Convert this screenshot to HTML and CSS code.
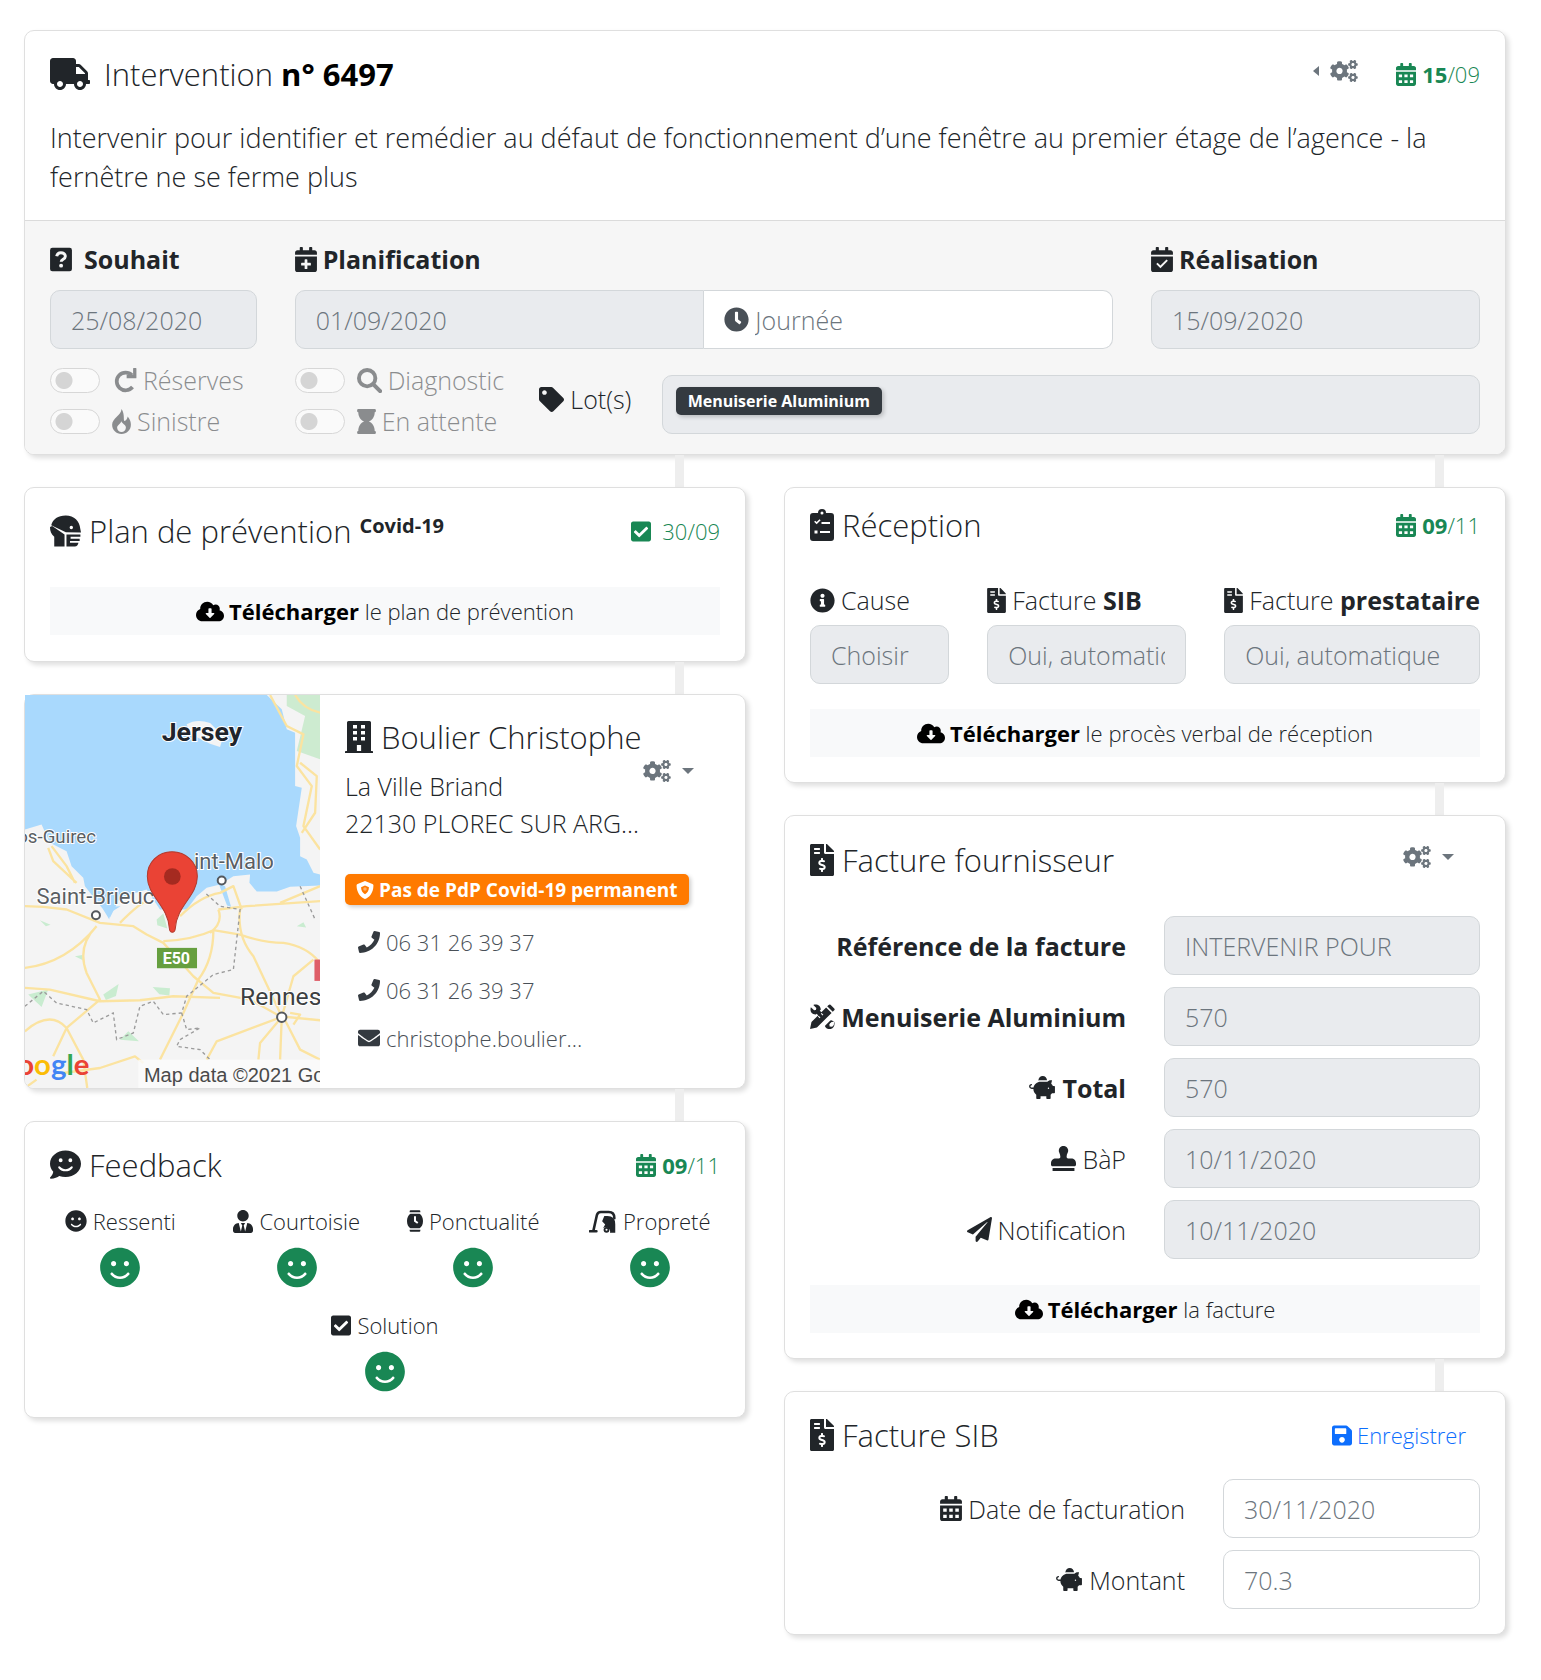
FILE: index.html
```html
<!DOCTYPE html>
<html lang="fr">
<head>
<meta charset="utf-8">
<meta name="viewport" content="width=device-width, initial-scale=1">
<title>Intervention n° 6497</title>
<link rel="stylesheet" href="styles.css">
</head>
<body>
<svg class="sprite" aria-hidden="true">
  <symbol id="truck" viewBox="0 0 640 512"><path d="M624 352h-16V243.9c0-12.7-5.1-24.9-14.1-33.9L494 110.1c-9-9-21.2-14.1-33.9-14.1H416V48c0-26.500-21.500-48-48-48H48C21.500 0 0 21.500 0 48v320c0 26.500 21.500 48 48 48h16c0 53 43 96 96 96s96-43 96-96h128c0 53 43 96 96 96s96-43 96-96h48c8.800 0 16-7.200 16-16v-32c0-8.800-7.200-16-16-16zM160 464c-26.500 0-48-21.500-48-48s21.500-48 48-48 48 21.500 48 48-21.500 48-48 48zm320 0c-26.500 0-48-21.500-48-48s21.500-48 48-48 48 21.500 48 48-21.500 48-48 48zm80-208H416V144h44.100l99.900 99.900V256z"/></symbol>
  <symbol id="calendar" viewBox="0 0 448 512"><path fill-rule="evenodd" d="M0 464c0 26.500 21.500 48 48 48h352c26.500 0 48-21.500 48-48V192H0zM64 256h72v64H64zM188 256h72v64h-72zM312 256h72v64h-72zM64 384h72v64H64zM188 384h72v64h-72zM312 384h72v64h-72zM400 64h-48V16c0-8.800-7.200-16-16-16h-32c-8.800 0-16 7.200-16 16v48H160V16c0-8.800-7.200-16-16-16h-32c-8.800 0-16 7.200-16 16v48H48C21.500 64 0 85.500 0 112v48h448v-48c0-26.500-21.500-48-48-48z"/></symbol>
  <symbol id="calendar-plus" viewBox="0 0 448 512"><path fill-rule="evenodd" d="M0 464c0 26.500 21.500 48 48 48h352c26.500 0 48-21.500 48-48V192H0zM196 264q0-12 12-12h32q12 0 12 12v60h60q12 0 12 12v32q0 12-12 12h-60v60q0 12-12 12h-32q-12 0-12-12v-60h-60q-12 0-12-12v-32q0-12 12-12h60zM400 64h-48V16c0-8.800-7.200-16-16-16h-32c-8.800 0-16 7.200-16 16v48H160V16c0-8.800-7.200-16-16-16h-32c-8.800 0-16 7.200-16 16v48H48C21.500 64 0 85.500 0 112v48h448v-48c0-26.500-21.500-48-48-48z"/></symbol>
  <symbol id="calendar-check" viewBox="0 0 448 512"><path fill-rule="evenodd" d="M0 464c0 26.500 21.500 48 48 48h352c26.500 0 48-21.500 48-48V192H0zM106 348l28-28 58 58 124-124 28 28-152 154zM400 64h-48V16c0-8.800-7.200-16-16-16h-32c-8.800 0-16 7.200-16 16v48H160V16c0-8.800-7.200-16-16-16h-32c-8.800 0-16 7.200-16 16v48H48C21.500 64 0 85.500 0 112v48h448v-48c0-26.500-21.500-48-48-48z"/></symbol>
  <symbol id="cogs" viewBox="0 0 640 512">
    <path id="small-gear" d="M512.100 191l-8.200 14.300c-3 5.300-9.400 7.500-15.100 5.400-11.800-4.400-22.600-10.700-32.100-18.600-4.600-3.800-5.800-10.500-2.800-15.700l8.200-14.300c-6.900-8-12.300-17.300-15.900-27.400h-16.500c-6 0-11.200-4.300-12.200-10.300-2-12-2.100-24.600 0-37.100 1-6 6.200-10.400 12.200-10.400h16.500c3.600-10.100 9-19.400 15.900-27.400l-8.200-14.300c-3-5.200-1.900-11.900 2.800-15.700 9.500-7.900 20.400-14.200 32.100-18.600 5.700-2.100 12.100.1 15.100 5.400l8.200 14.300c10.500-1.900 21.200-1.900 31.700 0L552 6.300c3-5.300 9.400-7.500 15.100-5.400 11.800 4.400 22.600 10.700 32.100 18.600 4.600 3.800 5.800 10.500 2.800 15.700l-8.200 14.300c6.900 8 12.300 17.300 15.900 27.400h16.500c6 0 11.200 4.300 12.200 10.300 2 12 2.100 24.600 0 37.100-1 6-6.200 10.400-12.200 10.400h-16.500c-3.600 10.100-9 19.400-15.900 27.400l8.200 14.300c3 5.200 1.900 11.900-2.800 15.700-9.500 7.900-20.400 14.200-32.100 18.600-5.700 2.100-12.100-.1-15.100-5.400l-8.200-14.300c-10.400 1.900-21.200 1.900-31.700 0zm-10.500-58.800c38.500 29.600 82.400-14.300 52.800-52.800-38.500-29.700-82.400 14.300-52.800 52.800z"/>
    <use href="#small-gear" y="300"/>
    <path d="M386.300 286.100l33.700 16.800c10.100 5.800 14.500 18.100 10.500 29.100-8.900 24.200-26.400 46.400-42.600 65.800-7.400 8.900-20.200 11.100-30.300 5.300l-29.100-16.800c-16 13.700-34.600 24.600-54.900 31.700v33.600c0 11.600-8.300 21.600-19.700 23.600-24.600 4.200-50.400 4.400-75.900 0-11.500-2-20-11.900-20-23.600V418c-20.300-7.200-38.900-18-54.900-31.700L74 403c-10 5.800-22.900 3.600-30.300-5.300-16.200-19.400-33.300-41.600-42.200-65.700-4-10.900.4-23.200 10.500-29.100l33.300-16.800c-3.900-20.900-3.900-42.400 0-63.400L12 205.800c-10.100-5.800-14.600-18.100-10.500-29 8.900-24.200 26-46.400 42.200-65.800 7.400-8.900 20.200-11.100 30.300-5.300l29.100 16.800c16-13.700 34.600-24.600 54.900-31.700V57.100c0-11.500 8.200-21.500 19.600-23.500 24.600-4.200 50.500-4.400 76-.1 11.500 2 20 11.900 20 23.600v33.600c20.300 7.200 38.900 18 54.900 31.700l29.100-16.800c10-5.800 22.900-3.600 30.300 5.300 16.200 19.400 33.200 41.600 42.100 65.800 4 10.900.1 23.200-10 29.100l-33.700 16.800c3.900 21 3.900 42.500 0 63.500zm-117.600 21.100c59.200-77-28.700-164.900-105.700-105.700-59.200 77 28.700 164.900 105.700 105.700z"/>
  </symbol>
  <symbol id="question" viewBox="0 0 448 512"><rect y="16" width="448" height="480" rx="48"/><path d="M136 190c8-44 38-74 86-74 50 0 90 30 90 76 0 60-84 58-84 112" fill="none" stroke="#f6f6f6" stroke-width="60"/><circle cx="226" cy="382" r="40" fill="#f6f6f6"/></symbol>
  <symbol id="redo" viewBox="0 0 512 512"><path d="M410 148A182 182 0 1 0 420 390" fill="none" stroke="currentColor" stroke-width="76"/><path d="M500 12v186q0 12-12 12H300v-66h132V12q0-12 12-12h44q12 0 12 12z"/></symbol>
  <symbol id="search" viewBox="0 0 512 512"><circle cx="208" cy="208" r="168" fill="none" stroke="currentColor" stroke-width="80"/><path d="M330 330l144 144" stroke="currentColor" stroke-width="84" stroke-linecap="round"/></symbol>
  <symbol id="fire" viewBox="0 0 384 512"><path fill-rule="evenodd" d="M192 0C190 130 0 190 0 322c0 106 86 190 192 190s192-84 192-190c0-88-40-124-64-166-16 60-40 90-62 90C220 246 270 110 192 0zM186 250c30 60 96 70 96 130a90 90 0 0 1-180 0c0-54 76-74 84-130z"/></symbol>
  <symbol id="hourglass" viewBox="0 0 384 512"><path d="M360 0H24Q0 0 0 24v16q0 24 24 24c0 91 51 167 121 192C75 281 24 357 24 448q-24 0-24 24v16q0 24 24 24h336q24 0 24-24v-16q0-24-24-24c0-91-51-167-121-192 70-25 121-101 121-192q24 0 24-24V24q0-24-24-24z"/></symbol>
  <symbol id="tag" viewBox="0 0 512 512"><path d="M0 252.100V48C0 21.500 21.500 0 48 0h204.100a48 48 0 0 1 33.900 14.100l212 211.800c18.700 18.700 18.700 49.100 0 67.900L293.800 497.900c-18.700 18.700-49.100 18.700-67.900 0L14.100 286A48 48 0 0 1 0 252.100zM112 64c-26.500 0-48 21.500-48 48s21.500 48 48 48 48-21.500 48-48-21.500-48-48-48z"/></symbol>
  <symbol id="clock" viewBox="0 0 512 512"><path d="M256 8C119 8 8 119 8 256s111 248 248 248 248-111 248-248S393 8 256 8zm92.500 313l-20 25a16 16 0 0 1-22.500 2.500l-67-49.700a40 40 0 0 1-15-31.200V112a16 16 0 0 1 16-16h32a16 16 0 0 1 16 16v144l58 42.500a16 16 0 0 1 2.500 22.500z"/></symbol>
  <symbol id="download" viewBox="0 0 640 512"><path d="M537.600 226.600c4.100-10.700 6.400-22.400 6.400-34.600 0-53-43-96-96-96-19.700 0-38.100 6-53.300 16.200C367 64.200 315.300 32 256 32c-88.400 0-160 71.600-160 160 0 2.700.1 5.400.2 8.100C40.200 219.800 0 273.200 0 336c0 79.500 64.500 144 144 144h368c70.700 0 128-57.300 128-128 0-61.900-44-113.600-102.400-125.400zM414.700 315.300L331.300 398.700c-6.200 6.200-16.400 6.200-22.600 0L225.300 315.300c-10-10-3-27.300 11.300-27.300H284V200c0-8.800 7.200-16 16-16h40c8.800 0 16 7.200 16 16v88h47.400c14.200 0 21.400 17.200 11.300 27.300z"/></symbol>
  <symbol id="check" viewBox="0 0 448 512"><path d="M400 480H48c-26.500 0-48-21.500-48-48V80c0-26.500 21.500-48 48-48h352c26.500 0 48 21.500 48 48v352c0 26.500-21.500 48-48 48zm-204.700-98.100l184-184c6.200-6.200 6.200-16.400 0-22.600l-22.600-22.600c-6.200-6.200-16.400-6.200-22.600 0L184 302.700l-70.100-70c-6.200-6.200-16.400-6.200-22.600 0l-22.600 22.600c-6.200 6.200-6.200 16.400 0 22.600l104 104c6.200 6.300 16.400 6.300 22.600 0z"/></symbol>
  <symbol id="phone" viewBox="0 0 512 512"><path d="M493.400 24.600l-104-24c-11.300-2.600-22.900 3.300-27.500 13.900l-48 112c-4.200 9.800-1.400 21.300 6.900 28l60.600 49.600c-36 76.700-98.900 140.500-177.200 177.200l-49.600-60.600c-6.800-8.300-18.200-11.100-28-6.900l-112 48C3.900 366.500-2 378.100.6 389.400l24 104C27.100 504.200 36.700 512 48 512c256.100 0 464-207.500 464-464 0-11.200-7.700-20.900-18.600-23.400z"/></symbol>
  <symbol id="envelope" viewBox="0 0 512 512"><path d="M502.300 190.800c3.900-3.100 9.700-.2 9.700 4.700V400c0 26.500-21.500 48-48 48H48c-26.500 0-48-21.500-48-48V195.600c0-5 5.700-7.800 9.700-4.700 22.400 17.400 52.100 39.500 154.100 113.600 21.100 15.400 56.700 47.800 92.200 47.600 35.700.3 72-32.800 92.300-47.600 102-74.100 131.600-96.300 154-113.700zM256 320c23.200.4 56.600-29.200 73.400-41.400 132.700-96.300 142.800-104.700 173.400-128.700 5.800-4.500 9.200-11.500 9.200-18.900v-19c0-26.500-21.500-48-48-48H48c-26.500 0-48 21.500-48 48v19c0 7.400 3.400 14.300 9.200 18.900 30.600 23.900 40.700 32.400 173.400 128.700 16.800 12.200 50.200 41.800 73.400 41.400z"/></symbol>
  <symbol id="info" viewBox="0 0 512 512"><path d="M256 8C119 8 8 119 8 256s111 248 248 248 248-111 248-248S393 8 256 8zm0 110c23.200 0 42 18.800 42 42s-18.800 42-42 42-42-18.800-42-42 18.800-42 42-42zm56 254c0 6.600-5.400 12-12 12h-88c-6.600 0-12-5.400-12-12v-24c0-6.600 5.400-12 12-12h12v-64h-12c-6.600 0-12-5.400-12-12v-24c0-6.600 5.400-12 12-12h64c6.600 0 12 5.400 12 12v100h12c6.600 0 12 5.400 12 12v24z"/></symbol>
  <symbol id="save" viewBox="0 0 448 512"><path d="M433.900 129.900l-83.800-83.800A48 48 0 0 0 316.100 32H48C21.500 32 0 53.500 0 80v352c0 26.500 21.500 48 48 48h352c26.500 0 48-21.500 48-48V163.900a48 48 0 0 0-14.100-34zM224 416c-35.300 0-64-28.700-64-64s28.700-64 64-64 64 28.700 64 64-28.700 64-64 64zm96-304.500V212c0 6.600-5.400 12-12 12H76c-6.600 0-12-5.400-12-12V108c0-6.600 5.400-12 12-12h228.500c3.200 0 6.200 1.300 8.500 3.500l3.500 3.500a12 12 0 0 1 3.500 8.500z"/></symbol>
  <symbol id="plane" viewBox="0 0 512 512"><path d="M476 3.200L12.500 270.600c-18.100 10.400-15.800 35.600 2.200 43.200L121 358.400l287.300-253.200c5.500-4.900 13.300 2.600 8.600 8.300L176 407v80.500c0 23.600 28.500 32.900 42.500 15.800L282 426l124.600 52.200c14.200 6 30.400-2.900 33-18.200l72-432C515 7.800 493.300-6.800 476 3.200z"/></symbol>
  <symbol id="smile" viewBox="0 0 496 512"><path d="M248 8C111 8 0 119 0 256s111 248 248 248 248-111 248-248S385 8 248 8zm80 168c17.700 0 32 14.300 32 32s-14.300 32-32 32-32-14.300-32-32 14.300-32 32-32zm-160 0c17.700 0 32 14.300 32 32s-14.300 32-32 32-32-14.300-32-32 14.300-32 32-32zm194.800 170.200C334.300 380.400 292.500 400 248 400s-86.300-19.600-114.800-53.800c-13.600-16.300 11-36.700 24.600-20.500 22.400 26.900 55.200 42.200 90.200 42.200s67.800-15.400 90.200-42.200c13.400-16.200 38.100 4.200 24.600 20.500z"/></symbol>
  <symbol id="comment-smile" viewBox="0 0 512 512"><path fill-rule="evenodd" d="M256 16C115 16 0 114 0 234c0 50 20 96 54 133-8 52-50 92-52 94-6 8 0 22 10 22 64 0 112-26 140-44 32 10 67 15 104 15 141 0 256-100 256-220S397 16 256 16zM176 146a32 32 0 1 1 0 64 32 32 0 0 1 0-64zM336 146a32 32 0 1 1 0 64 32 32 0 0 1 0-64zM142 282q14-12 26 2c48 54 128 54 176 0q12-14 26-2 12 12 0 26c-62 70-166 70-228 0q-12-14 0-26z"/></symbol>
  <symbol id="user-tie" viewBox="0 0 448 512"><path d="M224 256c70.700 0 128-57.300 128-128S294.700 0 224 0 96 57.300 96 128s57.300 128 128 128zm95.800 32.600L272 480l-32-136 32-56h-96l32 56-32 136-47.800-191.400C56.900 292 0 350.300 0 422.400V464c0 26.500 21.500 48 48 48h352c26.500 0 48-21.500 48-48v-41.600c0-72.100-56.900-130.400-128.200-133.800z"/></symbol>
  <symbol id="watch" viewBox="0 0 384 512"><path fill-rule="evenodd" d="M64 24Q64 0 88 0h208q24 0 24 24v24H64zM64 464h256v24q0 24-24 24H88q-24 0-24-24zM80 80h224c48 38 80 92 80 176s-32 138-80 176H80C32 394 0 340 0 256S32 118 80 80zM168 144v122l76 58 28-36-56-44V144z"/></symbol>
  <symbol id="vacuum" viewBox="0 0 640 512"><path d="M20 480h150M100 470L180 110Q200 40 270 40h180q130 0 130 140" fill="none" stroke="currentColor" stroke-width="58" stroke-linecap="round"/><path d="M350 130h70q180 0 180 190v192H480a100 100 0 0 0-160-100l50-90-70-70z"/><circle cx="400" cy="446" r="66"/><circle cx="400" cy="446" r="24" fill="#fff"/></symbol>
  <symbol id="stamp" viewBox="0 0 512 512"><path d="M32 512h448v-64H32v64zm384-256h-66.600c-16.200 0-29.400-13.200-29.400-29.400v-9.500c0-27.400 8.900-53.400 21.500-77.700 9.100-17.600 12.900-38.400 9-60.400-6.800-38.800-38.500-70.700-77.300-77.500C212.600-9 160 37.300 160 96c0 14.200 3.100 27.500 8.700 39.600C182 164.400 192 194.700 192 226.500c0 16.300-13.200 29.500-29.400 29.500H96c-53 0-96 43-96 96v32c0 17.700 14.300 32 32 32h448c17.700 0 32-14.300 32-32v-32c0-53-43-96-96-96z"/></symbol>
  <symbol id="invoice" viewBox="0 0 384 512"><path d="M377 105L279.100 7c-4.500-4.500-10.600-7-17-7H256v128h128v-6.100c0-6.300-2.500-12.400-7-16.900zm-153 31V0H24C10.700 0 0 10.700 0 24v464c0 13.300 10.700 24 24 24h336c13.300 0 24-10.700 24-24V160H248c-13.200 0-24-10.800-24-24zM64 72c0-4.400 3.600-8 8-8h80c4.400 0 8 3.600 8 8v16c0 4.400-3.600 8-8 8H72c-4.400 0-8-3.600-8-8V72zm0 80v-16c0-4.400 3.600-8 8-8h80c4.400 0 8 3.600 8 8v16c0 4.400-3.600 8-8 8H72c-4.400 0-8-3.600-8-8zm144 263.900V440c0 4.400-3.600 8-8 8h-16c-4.400 0-8-3.600-8-8v-24.300c-11.300-.6-22.300-4.500-31.400-11.300-3.900-2.900-4.100-8.800-.6-12.100l11.800-11.200c2.800-2.600 6.900-2.800 10.100-.7 3.900 2.400 8.300 3.700 12.800 3.700h28.100c6.500 0 11.800-5.900 11.800-13.200 0-6-3.600-11.200-8.800-12.700l-45-13.500c-18.600-5.600-31.600-23.400-31.600-43.400 0-24.500 19.100-44.400 42.700-45.100V232c0-4.400 3.600-8 8-8h16c4.400 0 8 3.600 8 8v24.300c11.300.6 22.300 4.500 31.400 11.300 3.900 2.900 4.100 8.800.6 12.100l-11.800 11.200c-2.800 2.600-6.900 2.800-10.100.7-3.900-2.400-8.300-3.700-12.800-3.700h-28.100c-6.500 0-11.800 5.900-11.800 13.200 0 6 3.600 11.200 8.800 12.700l45 13.500c18.600 5.600 31.600 23.400 31.600 43.400 0 24.500-19.100 44.400-42.700 45.100z"/></symbol>
  <symbol id="piggy" viewBox="0 0 576 512"><path d="M560 224h-29.500c-8.800-20-21.600-37.700-37.400-52.500L512 96h-32c-29.400 0-55.400 13.500-73 34.300-7.600-1.100-15.100-2.300-23-2.300H256c-77.400 0-141.900 55-156.800 128H56c-14.800 0-26.500-13.500-23.500-28.800C34.700 215.800 45.400 208 57 208h1c3.300 0 6-2.700 6-6v-20c0-3.300-2.700-6-6-6-28.500 0-53.900 20.400-57.500 48.600C-3.900 258.800 22.700 288 56 288h40c0 52.200 25.400 98.100 64 127.300V496c0 8.800 7.200 16 16 16h64c8.800 0 16-7.200 16-16v-48h128v48c0 8.800 7.200 16 16 16h64c8.800 0 16-7.200 16-16v-80.700c11.800-8.900 22.300-19.400 31.300-31.300H560c8.800 0 16-7.200 16-16V240c0-8.800-7.200-16-16-16zm-128 64c-8.800 0-16-7.200-16-16s7.200-16 16-16 16 7.200 16 16-7.200 16-16 16zM256 96h128c5.400 0 10.700.4 15.900.8 0-.3.1-.5.1-.8 0-53-43-96-96-96s-96 43-96 96c0 2.100.5 4.100.6 6.200 15.200-3.900 31-6.200 47.400-6.200z"/></symbol>
  <symbol id="tools" viewBox="0 0 512 512">
    <path d="M120 120l280 280" stroke="currentColor" stroke-width="90"/>
    <path d="M68 18l62 66-8 38-38 8L18 68C-8 140 30 220 120 214l100-94C226 40 150-8 68 18zM494 360c26 70-10 150-90 156-60-4-100-30-104-96l84-84c40-6 60-4 110 24l-64 14-34 36 6 52 52 2 34-36z"/>
    <path d="M140 490L490 140" stroke="#fff" stroke-width="176"/>
    <path d="M330 70l112 112-300 300L0 512l30-142zM352 48l30-30q18-18 38-2l76 76q18 20 0 38l-30 30z"/>
    <path d="M230 190l36 36M170 250l36 36" stroke="#fff" stroke-width="22"/>
  </symbol>
  <symbol id="building" viewBox="0 0 448 512"><path fill-rule="evenodd" d="M32 24Q32 0 56 0h336q24 0 24 24v456h20q12 0 12 12v20H0v-20q0-12 12-12h20zM128 64v56h64V64zM256 64v56h64V64zM128 160v56h64v-56zM256 160v56h64v-56zM128 256v56h64v-56zM256 256v56h64v-56zM190 384v96h68v-96z"/></symbol>
  <symbol id="clipboard" viewBox="0 0 384 512"><path fill-rule="evenodd" d="M336 64h-80a64 64 0 0 0-128 0H48Q0 64 0 112v352q0 48 48 48h288q48 0 48-48V112q0-48-48-48zM192 40a24 24 0 1 1 0 48 24 24 0 0 1 0-48zM66 204l18-18 22 20 46-44 18 18-64 62zM184 208h136v32H184zM72 344h48v48H72zM160 352h160v32H160z"/></symbol>
  <symbol id="mask" viewBox="0 0 512 512"><path fill-rule="evenodd" d="M20 160C50 60 130 0 260 0c140 0 230 90 240 220l12 60-250-2zM352 170a28 28 0 1 0 0 56 28 28 0 0 0 0-56z"/><path d="M0 190l36-16 204 140v198H70V350C20 310 0 260 0 190zM272 312h230v40H340v32h150v36H330v32h140q-10 60-60 60H272z"/></symbol>
  <symbol id="shield" viewBox="0 0 512 512"><path fill-rule="evenodd" d="M466 84L274 4q-18-8-36 0L46 84q-30 12-30 44c0 198 114 334 222 380q18 8 36 0c86-36 222-158 222-380q0-32-30-44zM256 130l112 48c0 90-44 160-112 200-68-40-112-110-112-200z"/><circle cx="256" cy="230" r="50" opacity=".4"/></symbol>
</svg>

<main class="page">
  <section class="card">
    <div class="card-body intro">
      <header class="card-head">
        <h1 class="title title-main"><svg class="icon-xl"><use href="#truck"/></svg><span>Intervention <b>n° 6497</b></span></h1>
        <div class="head-tools">
          <button class="menu-button" type="button" aria-label="Actions"><span class="caret-left"></span><svg class="icon-gears"><use href="#cogs"/></svg></button>
          <span class="date"><svg class="icon-s"><use href="#calendar"/></svg><span><b>15</b>/09</span></span>
        </div>
      </header>
      <p class="description">Intervenir pour identifier et remédier au défaut de fonctionnement d’une fenêtre au premier étage de l’agence - la fernêtre ne se ferme plus</p>
    </div>
    <div class="planning">
      <div class="span-2 field">
        <label class="strong wide-gap" for="wish"><svg class="icon"><use href="#question"/></svg>Souhait</label>
        <input class="control" id="wish" value="25/08/2020" disabled>
      </div>
      <div class="span-7 field">
        <label class="strong" for="plan"><svg class="icon"><use href="#calendar-plus"/></svg>Planification</label>
        <div class="group">
          <input class="control" id="plan" value="01/09/2020" disabled>
          <div class="control slot"><svg class="icon-m"><use href="#clock"/></svg><select aria-label="Créneau"><option>Journée</option></select></div>
        </div>
      </div>
      <div class="span-3 field">
        <label class="strong" for="done"><svg class="icon"><use href="#calendar-check"/></svg>Réalisation</label>
        <input class="control" id="done" value="15/09/2020" disabled>
      </div>
      <div class="span-2 switches">
        <label class="switch"><input type="checkbox" disabled><svg class="icon-m"><use href="#redo"/></svg>Réserves</label>
        <label class="switch"><input type="checkbox" disabled><svg class="icon-n"><use href="#fire"/></svg>Sinistre</label>
      </div>
      <div class="span-2 switches">
        <label class="switch"><input type="checkbox" disabled><svg class="icon-m"><use href="#search"/></svg>Diagnostic</label>
        <label class="switch"><input type="checkbox" disabled><svg class="icon-n"><use href="#hourglass"/></svg>En attente</label>
      </div>
      <div class="span-1 lots"><svg class="icon-m"><use href="#tag"/></svg>Lot(s)</div>
      <div class="span-7 control disabled tags"><span class="tag">Menuiserie Aluminium</span></div>
    </div>
  </section>

  <div class="columns">
    <div class="column">
      <div class="connector"></div>
      <section class="card card-body prevention">
        <header class="card-head">
          <h2 class="title"><svg class="icon-l"><use href="#mask"/></svg><span>Plan de prévention <sup>Covid-19</sup></span></h2>
          <span class="date date-wide"><svg class="icon-s"><use href="#check"/></svg>30/09</span>
        </header>
        <a class="download" href="#"><svg class="icon-w"><use href="#download"/></svg><span><b>Télécharger</b> le plan de prévention</span></a>
      </section>
      <div class="connector"></div>
      <section class="card contact">
        <svg class="map" viewBox="75 47 885 1178" preserveAspectRatio="xMidYMid slice" role="img" aria-label="Carte">
          <rect x="75" y="47" width="885" height="1178" fill="#f4f4f4"/>
          <path fill="#a9d9fd" d="M75 47H800L845 90 860 150 885 160 885 320 905 325 888 440 900 475 900 530 920 540 940 580 960 585V618L870 622 830 636H770L748 610 750 585 700 590 660 615 620 625 590 650 560 690 480 690 440 630 360 655 330 715 310 690 255 620 250 595 215 560 200 515 150 490 125 435 75 450z"/>
          <path fill="#a9d9fd" d="M655 610l20 10 18 62-12-4zM310 690l20-8 32-2-32 20-2 20z"/>
          <path fill="#f4f4f4" d="M560 135q30-18 70-4l40 40-10 32-30-10-60-30z"/>
          <path fill="#cdebd0" d="M860 47H960V240L890 215 915 110 860 80z"/>
          <g fill="#c9ecd0"><path d="M470 720l20-18 12 45-30-10zM310 945l46-32-8 36-30 12zM458 922l52 4-2 22-30-4zM85 945l60-15-20 52zM360 1080l25-25 32 30zM890 740l20-12 8 16zM120 722l32 14-14 4zM225 830l22-4 2 16z"/></g>
          <g fill="none" stroke="#fbe3a0" stroke-width="7" stroke-linejoin="round">
            <path d="M75 680L130 682 200 690 300 730 400 740 440 765 490 790 580 890 640 940 750 960 840 1010 960 1022"/>
            <path d="M75 925L150 930 300 965 420 962 520 950 660 955M75 865Q200 850 290 740M290 740Q230 800 260 880L300 960 200 1045 160 1130M75 1055Q150 990 200 1045L250 1140 262 1225M75 1225L110 1200M190 1180L300 1165 405 1130 430 1150"/>
            <path d="M490 785Q580 780 640 752L720 765Q790 790 850 790 920 800 960 850M640 752Q640 840 595 900L550 1000 490 1120 480 1140M655 690L740 680 960 665M655 690Q670 730 630 760M720 690Q710 770 760 830L840 1000M540 710Q600 650 660 640L700 620 725 690M360 730Q420 670 440 665M840 670L960 620"/>
            <path d="M845 1012L780 1090 775 1140M845 1012L650 1085 620 1140M845 1012L840 1140M850 1012L900 1110 960 1140M845 1012L880 890 940 840M870 1000l30 5-20 30"/>
            <path d="M810 47L860 140 910 165 890 260 935 320 910 440 960 510M885 47Q910 90 960 100M900 250L950 290 945 400 905 460M145 505L160 545 230 610M155 500L200 560 225 610"/>
          </g>
          <path d="M75 980L130 935 170 970 260 990 280 1030 340 1000 350 1080 400 1060 420 980 460 965 490 1005 545 1000 560 950 640 885 700 870 720 690 660 680 615 640M900 620L945 720M545 1000L560 1050 600 1045 540 1080 530 1100 600 1110 630 1140" fill="none" stroke="#9b9b9b" stroke-width="4" stroke-dasharray="10 9"/>
          <rect x="943" y="840" width="20" height="64" fill="#df5e68"/>
          <g class="map-label">
            <text x="485" y="184" font-size="80" font-weight="700" fill="#20242c">Jersey</text>
            <text x="52" y="492" font-size="56">os-Guirec</text>
            <text x="582" y="570" font-size="66">int-Malo</text>
            <text x="110" y="674" font-size="66">Saint-Brieuc</text>
            <text x="720" y="976" font-size="74" fill="#3c3f42">Rennes</text>
          </g>
          <g fill="#fff" stroke="#54585d" stroke-width="6"><circle cx="665" cy="603" r="12"/><circle cx="288" cy="707" r="12"/><circle cx="845" cy="1013" r="14"/></g>
          <rect x="471" y="805" width="120" height="61" fill="#669f3f"/>
          <text class="map-road" x="488" y="853" font-size="48">E50</text>
          <path d="M516 517c-42 0-74 32-74 73 0 60 62 88 66 156q1 12 9 12t9-12c4-68 66-96 66-156 0-41-34-73-76-73z" fill="#ea4335" stroke="#b33a2d" stroke-width="3"/>
          <circle cx="517" cy="591" r="25" fill="#a52a20"/>
          <rect x="415" y="1140" width="545" height="85" fill="#fafafa" opacity=".85"/>
          <text class="map-credit" x="432" y="1206" font-size="60">Map data ©2021 Google</text>
          <text class="map-brand" x="52" y="1186" font-size="88"><tspan fill="#ea4335">o</tspan><tspan fill="#fbbc05">o</tspan><tspan fill="#4285f4">g</tspan><tspan fill="#34a853">l</tspan><tspan fill="#ea4335">e</tspan></text>
        </svg>
        <div class="contact-body">
          <h2 class="title"><svg class="icon-b"><use href="#building"/></svg>Boulier Christophe</h2>
          <div class="address-row">
            <address>La Ville Briand<br>22130 PLOREC SUR ARG...</address>
            <button class="menu-button" type="button" aria-label="Actions du contact"><svg class="icon-gears"><use href="#cogs"/></svg><span class="caret-down"></span></button>
          </div>
          <span class="alert"><svg class="icon-xs"><use href="#shield"/></svg>Pas de PdP Covid-19 permanent</span>
          <ul class="links">
            <li><a href="#"><svg class="icon-p"><use href="#phone"/></svg>06 31 26 39 37</a></li>
            <li><a href="#"><svg class="icon-p"><use href="#phone"/></svg>06 31 26 39 37</a></li>
            <li><a href="#"><svg class="icon-p"><use href="#envelope"/></svg>christophe.boulier...</a></li>
          </ul>
        </div>
      </section>
      <div class="connector"></div>
      <section class="card card-body feedback">
        <header class="card-head">
          <h2 class="title"><svg class="icon-l"><use href="#comment-smile"/></svg>Feedback</h2>
          <span class="date"><svg class="icon-s"><use href="#calendar"/></svg><span><b>09</b>/11</span></span>
        </header>
        <ul class="ratings">
          <li><span class="rating"><svg class="icon-r"><use href="#smile"/></svg>Ressenti</span><svg class="face"><use href="#smile"/></svg></li>
          <li><span class="rating"><svg class="icon-s"><use href="#user-tie"/></svg>Courtoisie</span><svg class="face"><use href="#smile"/></svg></li>
          <li><span class="rating"><svg class="icon-t"><use href="#watch"/></svg>Ponctualité</span><svg class="face"><use href="#smile"/></svg></li>
          <li><span class="rating"><svg class="icon-w"><use href="#vacuum"/></svg>Propreté</span><svg class="face"><use href="#smile"/></svg></li>
          <li><span class="rating"><svg class="icon-s"><use href="#check"/></svg>Solution</span><svg class="face"><use href="#smile"/></svg></li>
        </ul>
      </section>
    </div>

    <div class="column">
      <div class="connector"></div>
      <section class="card card-body reception">
        <header class="card-head">
          <h2 class="title"><svg class="icon-d"><use href="#clipboard"/></svg>Réception</h2>
          <span class="date"><svg class="icon-s"><use href="#calendar"/></svg><span><b>09</b>/11</span></span>
        </header>
        <div class="choices">
          <div class="field"><label for="cause"><svg class="icon-m"><use href="#info"/></svg>Cause</label><select class="control" id="cause" disabled><option>Choisir</option></select></div>
          <div class="field"><label for="sib"><svg class="icon-n"><use href="#invoice"/></svg><span>Facture <b>SIB</b></span></label><select class="control" id="sib" disabled><option>Oui, automatique</option></select></div>
          <div class="field"><label for="provider"><svg class="icon-n"><use href="#invoice"/></svg><span>Facture <b>prestataire</b></span></label><select class="control" id="provider" disabled><option>Oui, automatique</option></select></div>
        </div>
        <a class="download" href="#"><svg class="icon-w"><use href="#download"/></svg><span><b>Télécharger</b> le procès verbal de réception</span></a>
      </section>
      <div class="connector"></div>
      <section class="card card-body supplier">
        <header class="card-head">
          <h2 class="title"><svg class="icon-d"><use href="#invoice"/></svg>Facture fournisseur</h2>
          <button class="menu-button" type="button" aria-label="Actions de la facture"><svg class="icon-gears"><use href="#cogs"/></svg><span class="caret-down"></span></button>
        </header>
        <div class="rows">
          <label class="strong" for="ref">Référence de la facture</label><input class="control" id="ref" value="INTERVENIR POUR" disabled>
          <label class="strong" for="alu"><svg class="icon-m"><use href="#tools"/></svg>Menuiserie Aluminium</label><input class="control" id="alu" value="570" disabled>
          <label class="strong" for="total"><svg class="icon-w"><use href="#piggy"/></svg>Total</label><input class="control" id="total" value="570" disabled>
          <label for="bap"><svg class="icon-m"><use href="#stamp"/></svg>BàP</label><input class="control" id="bap" value="10/11/2020" disabled>
          <label for="notif"><svg class="icon-m"><use href="#plane"/></svg>Notification</label><input class="control" id="notif" value="10/11/2020" disabled>
        </div>
        <a class="download" href="#"><svg class="icon-w"><use href="#download"/></svg><span><b>Télécharger</b> la facture</span></a>
      </section>
      <div class="connector"></div>
      <section class="card card-body sib">
        <header class="card-head">
          <h2 class="title"><svg class="icon-d"><use href="#invoice"/></svg>Facture SIB</h2>
          <button class="save" type="button"><svg class="icon-s"><use href="#save"/></svg>Enregistrer</button>
        </header>
        <div class="rows rows-narrow">
          <label for="bill-date"><svg class="icon"><use href="#calendar"/></svg>Date de facturation</label><input class="control" id="bill-date" value="30/11/2020">
          <label for="amount"><svg class="icon-w"><use href="#piggy"/></svg>Montant</label><input class="control" id="amount" value="70.3">
        </div>
      </section>
    </div>
  </div>
</main>
</body>
</html>
```

FILE: styles.css
```css
* { box-sizing: border-box; }

body {
  margin: 0;
  background: #fff;
  color: #212529;
  font: 300 25px/36px "Open Sans", sans-serif;
}

b, .strong { font-weight: 700; }
h1, h2, p, ul { margin: 0; padding: 0; font-weight: 300; }
ul { list-style: none; }
a { color: inherit; text-decoration: none; }
button, input, select { font: inherit; color: inherit; }
button { padding: 0; border: 0; background: none; }

svg { flex: none; fill: currentColor; }
.sprite { position: absolute; width: 0; height: 0; }
.icon { width: 22px; height: 25px; }
.icon-xl { width: 40px; height: 32px; }
.icon-l { width: 31px; height: 32px; }
.icon-b { width: 28px; height: 32px; }
.icon-d { width: 24px; height: 32px; }
.icon-m { width: 25px; height: 25px; }
.icon-n { width: 19px; height: 25px; }
.icon-w { width: 28px; height: 23px; }
.icon-s { width: 20px; height: 23px; }
.icon-r, .icon-p { width: 22px; height: 22px; }
.icon-t { width: 16px; height: 22px; }
.icon-xs { width: 18px; height: 18px; }
.icon-gears { width: 28px; height: 22px; }

.page { padding: 30px 35px 44px 24px; }

.card {
  border: 1px solid #dfdfdf;
  border-radius: 10px;
  background: #fff;
  box-shadow: 3px 3px 5px rgba(0, 0, 0, .13);
}
.card-body { padding: 25px; }
.card-head { display: flex; justify-content: space-between; align-items: center; }

.title { display: flex; align-items: center; gap: 8px; font-size: 31px; line-height: 40px; white-space: nowrap; }
.title-main { gap: 14px; }
.title-main b { color: #000; }
.title sup { font-size: 20px; line-height: 20px; font-weight: 700; vertical-align: 10px; }

.head-tools { display: flex; align-items: center; gap: 38px; }
.menu-button { display: flex; align-items: center; gap: 11px; color: #6c757d; }
.card-head .menu-button { padding-bottom: 6px; }
.caret-left { border: 5px solid transparent; border-right: 6px solid currentColor; border-left: 0; }
.caret-down { border: 6px solid transparent; border-top-color: currentColor; border-bottom: 0; }
.date { display: flex; align-items: center; gap: 6px; color: #198754; font-size: 22px; white-space: nowrap; }
.date-wide { gap: 11px; }

.intro { padding-top: 23px; padding-bottom: 24px; }
.description { margin-top: 24px; font-size: 27px; line-height: 39px; }

.planning {
  display: grid;
  grid-template-columns: repeat(12, minmax(0, 1fr));
  column-gap: 38px;
  padding: 20px 25px 15px;
  border-top: 1px solid #dbdbdb;
  border-radius: 0 0 9px 9px;
  background: #f6f6f6;
}
.span-1 { grid-column: span 1; }
.span-2 { grid-column: span 2; }
.span-3 { grid-column: span 3; }
.span-7 { grid-column: span 7; }

.field { display: flex; flex-direction: column; gap: 13px; min-width: 0; }
label, .lots, .rating { display: flex; align-items: center; gap: 6px; white-space: nowrap; }
.wide-gap { gap: 12px; }

.control {
  width: 100%;
  min-width: 0;
  height: 59px;
  padding: 0 20px;
  border: 1px solid #d3d7da;
  border-radius: 10px;
  background: #fff;
  color: #6c757d;
  appearance: none;
}
.control:disabled, .disabled { background: #e9ebee; opacity: 1; }

.group { display: flex; }
.group .control { flex: 1; }
.group .control:first-child { border-radius: 10px 0 0 10px; }
.group .control:last-child { border-left: 0; border-radius: 0 10px 10px 0; }
.slot { display: flex; align-items: center; gap: 6px; }
.slot svg { color: #495057; }
.slot select { flex: 1; min-width: 0; padding: 0; border: 0; background: none; appearance: none; }

.switches { display: flex; flex-direction: column; gap: 5px; padding-top: 13px; }
.switch { opacity: .5; }
.switch input {
  flex: none;
  width: 50px;
  height: 25px;
  margin: 0 6px 0 0;
  border: 1px solid #b9b9b9;
  border-radius: 13px;
  background: #fff radial-gradient(circle at 13px 50%, #b5b5b5 8px, transparent 9px);
  appearance: none;
}
.lots { align-self: center; padding-top: 10px; }
.tags { align-self: center; display: flex; align-items: center; margin-top: 20px; padding: 0 13px; }
.tag, .alert { border-radius: 5px; font-weight: 700; white-space: nowrap; box-shadow: 2px 2px 4px rgba(0, 0, 0, .2); }
.tag { margin-bottom: 6px; padding: 0 12px; background: #343a40; color: #fff; font-size: 16px; line-height: 28px; }

.columns { display: grid; grid-template-columns: repeat(2, minmax(0, 1fr)); column-gap: 38px; align-items: start; }
.connector { width: 9px; height: 32px; margin: 0 62px 0 auto; background: #eee; }

.download {
  display: flex;
  justify-content: center;
  align-items: center;
  gap: 5px;
  height: 48px;
  background: #f8f9fa;
  font-size: 22px;
  white-space: nowrap;
}
.download svg, .download b { color: #000; }

.prevention { padding-top: 23px; padding-bottom: 26px; }
.prevention .card-head { margin-bottom: 36px; }

.contact { display: flex; min-height: 395px; }
.map { width: 295px; height: 393px; border-radius: 0 0 0 9px; }
.map-label { font-family: Roboto, sans-serif; font-weight: 400; fill: #5a5e63; stroke: #fff; stroke-width: 6px; paint-order: stroke; }
.map-road { font-family: Roboto, sans-serif; font-weight: 700; fill: #fff; }
.map-credit { font-family: "Liberation Sans", sans-serif; font-weight: 400; fill: #4a4a4a; }
.map-brand { font-family: Lato, sans-serif; font-weight: 700; }
.contact-body { flex: 1; min-width: 0; padding: 22px 25px; }
.address-row { display: flex; justify-content: space-between; align-items: flex-start; margin-top: 3px; }
.address-row .menu-button { margin-right: 26px; }
address { padding-top: 8px; font-size: 25px; font-style: normal; line-height: 37px; white-space: nowrap; }
.alert { display: inline-flex; align-items: center; gap: 5px; height: 31px; margin: 32px 0 19px; padding: 0 11px; background: #ff7a00; color: #fff; font-size: 19px; }
.links { display: grid; gap: 12px; padding-left: 13px; font-size: 22px; }
.links a { display: flex; align-items: center; gap: 6px; color: #495057; }
.links svg { color: #343a40; }

.ratings { display: flex; flex-wrap: wrap; justify-content: center; margin: 18px -18px 0; font-size: 22px; }
.ratings li { flex: 0 0 25%; display: flex; flex-direction: column; align-items: center; gap: 8px; margin-bottom: 19px; }
.face { width: 40px; height: 41px; color: #198754; }
.feedback { padding-top: 23px; padding-bottom: 6px; }

.reception { padding-top: 17px; }
.choices { display: grid; grid-template-columns: minmax(0, 7fr) minmax(0, 10fr) auto; gap: 38px; margin: 37px 0 25px; }
.choices .field { gap: 7px; }
.supplier { padding-top: 24px; }
.supplier .card-head { margin-bottom: 36px; }
.supplier .menu-button { margin-right: 26px; }
.supplier .download { margin-top: 26px; }
.rows { display: grid; grid-template-columns: minmax(0, 1fr) 316px; gap: 12px 38px; }
.rows label { justify-content: flex-end; }
.rows-narrow { grid-template-columns: minmax(0, 1fr) 257px; }
.sib { padding-top: 23px; }
.sib .card-head { margin-bottom: 24px; }
.save { display: flex; align-items: center; gap: 5px; margin-right: 14px; color: #0d6efd; font-weight: 300; font-size: 22px; }
```
